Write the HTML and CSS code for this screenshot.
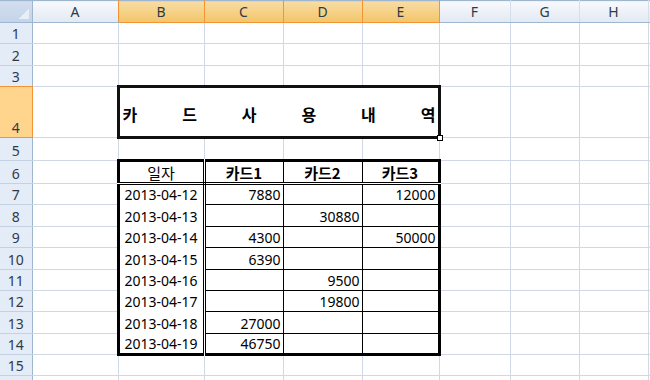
FILE: index.html
```html
<!DOCTYPE html>
<html lang="ko">
<head>
    <meta charset="UTF-8">
    <title>카드 사용 내역</title>
    <link rel="stylesheet" href="styles.css">
</head>
<body>

<table class="sheet">
    <colgroup>
        <col class="w-rh">
        <col class="w-86">
        <col class="w-86">
        <col class="w-79">
        <col class="w-79">
        <col class="w-77">
        <col class="w-71">
        <col class="w-69">
        <col class="w-69">
        <col class="w-rest">
    </colgroup>
    <thead>
        <tr>
            <th class="corner"></th>
            <th class="col pre-sel">A</th>
            <th class="col sel">B</th>
            <th class="col sel">C</th>
            <th class="col sel">D</th>
            <th class="col sel">E</th>
            <th class="col">F</th>
            <th class="col">G</th>
            <th class="col">H</th>
            <th class="col"></th>
        </tr>
    </thead>
    <tbody>
        <tr class="short">
            <th class="row">1</th>
            <td></td><td></td><td></td><td></td><td></td><td></td><td></td><td></td><td></td>
        </tr>
        <tr class="short">
            <th class="row">2</th>
            <td></td><td></td><td></td><td></td><td></td><td></td><td></td><td></td><td></td>
        </tr>
        <tr class="short">
            <th class="row pre-sel">3</th>
            <td></td><td></td><td></td><td></td><td></td><td></td><td></td><td></td><td></td>
        </tr>
        <tr class="tall">
            <th class="row sel">4</th>
            <td></td>
            <td colspan="4" class="title">
                <div class="title-text">
                    <span>카</span><span>드</span><span>사</span><span>용</span><span>내</span><span>역</span>
                </div>
                <span class="handle"></span>
            </td>
            <td></td><td></td><td></td><td></td>
        </tr>
        <tr class="mid">
            <th class="row">5</th>
            <td></td><td></td><td></td><td></td><td></td><td></td><td></td><td></td><td></td>
        </tr>
        <tr class="mid">
            <th class="row">6</th>
            <td></td>
            <td class="hd dt plain">일자</td>
            <td class="hd">카드1</td>
            <td class="hd">카드2</td>
            <td class="hd last-col">카드3</td>
            <td></td><td></td><td></td><td></td>
        </tr>
        <tr>
            <th class="row">7</th>
            <td></td>
            <td class="dt">2013-04-12</td>
            <td class="cell num">7880</td>
            <td class="cell num"></td>
            <td class="cell num last-col">12000</td>
            <td></td><td></td><td></td><td></td>
        </tr>
        <tr>
            <th class="row">8</th>
            <td></td>
            <td class="dt">2013-04-13</td>
            <td class="cell num"></td>
            <td class="cell num">30880</td>
            <td class="cell num last-col"></td>
            <td></td><td></td><td></td><td></td>
        </tr>
        <tr>
            <th class="row">9</th>
            <td></td>
            <td class="dt">2013-04-14</td>
            <td class="cell num">4300</td>
            <td class="cell num"></td>
            <td class="cell num last-col">50000</td>
            <td></td><td></td><td></td><td></td>
        </tr>
        <tr>
            <th class="row">10</th>
            <td></td>
            <td class="dt">2013-04-15</td>
            <td class="cell num">6390</td>
            <td class="cell num"></td>
            <td class="cell num last-col"></td>
            <td></td><td></td><td></td><td></td>
        </tr>
        <tr>
            <th class="row">11</th>
            <td></td>
            <td class="dt">2013-04-16</td>
            <td class="cell num"></td>
            <td class="cell num">9500</td>
            <td class="cell num last-col"></td>
            <td></td><td></td><td></td><td></td>
        </tr>
        <tr>
            <th class="row">12</th>
            <td></td>
            <td class="dt">2013-04-17</td>
            <td class="cell num"></td>
            <td class="cell num">19800</td>
            <td class="cell num last-col"></td>
            <td></td><td></td><td></td><td></td>
        </tr>
        <tr>
            <th class="row">13</th>
            <td></td>
            <td class="dt">2013-04-18</td>
            <td class="cell num">27000</td>
            <td class="cell num"></td>
            <td class="cell num last-col"></td>
            <td></td><td></td><td></td><td></td>
        </tr>
        <tr>
            <th class="row">14</th>
            <td></td>
            <td class="dt last-row">2013-04-19</td>
            <td class="cell num last-row">46750</td>
            <td class="cell num last-row"></td>
            <td class="cell num last-col last-row"></td>
            <td></td><td></td><td></td><td></td>
        </tr>
        <tr>
            <th class="row">15</th>
            <td></td><td></td><td></td><td></td><td></td><td></td><td></td><td></td><td></td>
        </tr>
        <tr>
            <th class="row"></th>
            <td></td><td></td><td></td><td></td><td></td><td></td><td></td><td></td><td></td>
        </tr>
    </tbody>
</table>

</body>
</html>
```

FILE: styles.css
```css
body {
    margin: 0;
    background-color: #fff;
    overflow: hidden;
}

.sheet {
    border-collapse: collapse;
    table-layout: fixed;
    width: 658px;
    font-family: "Noto Sans", "Noto Sans CJK KR", sans-serif;
    font-size: 14px;
    color: #000;
}

/* column widths */
.w-rh { width: 32px; }
.w-86 { width: 86px; }
.w-79 { width: 79px; }
.w-77 { width: 77px; }
.w-71 { width: 71px; }
.w-69 { width: 69px; }
.w-rest { width: 10px; }

/* row heights */
thead tr { height: 22px; }
tbody tr { height: 21.4px; }
tbody tr.short { height: 21.3px; }
tbody tr.tall { height: 50.7px; }
tbody tr.mid { height: 23.2px; }

td {
    border: 1px solid #d0d7e5;
    padding: 0 3px;
    white-space: nowrap;
    overflow: hidden;
    vertical-align: bottom;
    line-height: 18px;
}

/* headers */
th {
    font-weight: normal;
    padding: 0;
    color: #2f3a48;
    font-size: 14px;
    line-height: 18px;
}

.corner {
    border-top: 1px solid #9eb6ce;
    border-right: 1px solid #9eb6ce;
    border-bottom: 1px solid #9eb6ce;
    background:
        linear-gradient(to top left, #e9eef6 50%, transparent 50%) no-repeat right 3px bottom 3px / 11px 11px,
        linear-gradient(#d2deee, #c3d3e9);
}

.col {
    border-top: 1px solid #9eb6ce;
    border-right: 1px solid #d5dfec;
    border-bottom: 1px solid #9eb6ce;
    background: linear-gradient(#f7f9fc, #e2e9f3);
    text-align: center;
    vertical-align: middle;
}

.col.sel {
    border-right-color: #f29436;
    border-bottom-color: #f29436;
    background: linear-gradient(#f9dca5, #f2c568);
}

.col.pre-sel {
    border-right-color: #f29436;
}

.row {
    border-right: 1px solid #9eb6ce;
    border-bottom: 1px solid #c3d1e3;
    background-color: #e4ecf7;
    text-align: center;
    vertical-align: bottom;
}

.row.pre-sel {
    border-bottom-color: #f29436;
}

.row.sel {
    border-right-color: #f29436;
    border-bottom-color: #f29436;
    background-color: #ffd58d;
}

/* title block */
.title {
    position: relative;
    overflow: visible;
    border: 3px solid #111;
    vertical-align: middle;
    padding: 0 2px 0 3px;
}

.title-text {
    display: flex;
    justify-content: space-between;
    font-family: "Noto Sans CJK KR", sans-serif;
    font-weight: bold;
    font-size: 16px;
    line-height: 22px;
    padding-top: 4px;
}

.handle {
    position: absolute;
    right: -5px;
    bottom: -5px;
    width: 4px;
    height: 4px;
    border: 1px solid #000;
    background-color: #fff;
}

/* card table */
.hd {
    border-top: 3px solid #000;
    border-bottom: 3px double #000;
    border-left: 1px solid #000;
    border-right: 1px solid #000;
    text-align: center;
    font-family: "Noto Sans CJK KR", sans-serif;
    font-size: 15px;
    font-weight: bold;
}

.hd.plain {
    font-weight: normal;
    color: #000;
}

.dt {
    border-left: 3px solid #000;
    border-right: 3px double #000;
    border-top: 1px solid #fff;
    border-bottom: 1px solid #fff;
    text-align: center;
    background-color: #fff;
}

.hd.dt {
    border-top: 3px solid #000;
    border-bottom: 3px double #000;
}

.cell {
    border: 1px solid #000;
    background-color: #fff;
}

.num {
    text-align: right;
    padding-right: 2px;
}

.last-col {
    border-right: 3px solid #000;
}

.last-row {
    border-bottom: 3px solid #000;
}
```
